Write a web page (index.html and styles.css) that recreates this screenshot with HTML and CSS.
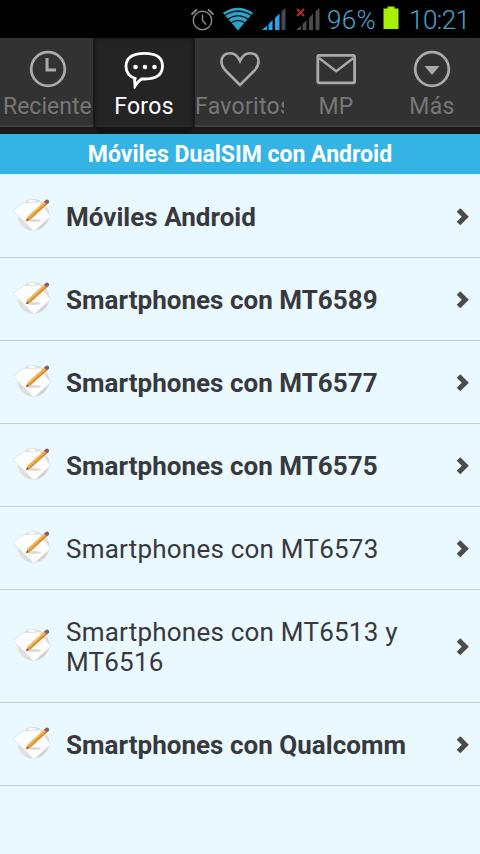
FILE: index.html
```html
<!DOCTYPE html>
<html lang="es">
<head>
<meta charset="utf-8">
<title>Móviles DualSIM con Android</title>
<link rel="stylesheet" href="styles.css">
</head>
<body>
<svg class="defs" aria-hidden="true">
  <defs>
    <linearGradient id="disc" x1="0" y1="0" x2="1" y2="1">
      <stop offset="0" stop-color="#d3d5d3"/><stop offset=".5" stop-color="#e2e3e0"/><stop offset="1" stop-color="#c4c9c2"/>
    </linearGradient>
    <symbol id="note" viewBox="0 0 40 36">
      <circle cx="21.500" cy="17" r="15.500" fill="url(#disc)" stroke="#dfe2df"/>
      <path d="M1 12.500 L12 4.500 L28 4 L38.500 18.500 L22 33.500 Z" fill="#fefdfd" stroke="#e0dedd" stroke-width=".7"/>
      <path d="M15 2.500 Q20 7 25 2.500 L20 1.200 Z" fill="#fff" stroke="#d0d0d8" stroke-width=".5"/>
      <ellipse cx="22" cy="22.500" rx="7" ry="1.500" fill="#c9bfc0" opacity=".6"/>
      <path d="M14 23.200 L15.600 18.600 L32.300 3.200 L35.200 6.400 L18.200 21.800 Z" fill="#e8a645"/>
      <path d="M17.600 21.200 L34.400 5.800" stroke="#b5782f" stroke-width=".8"/>
      <path d="M16.200 19 L32.400 4" stroke="#f7cf72" stroke-width="1"/>
      <path d="M14 23.200 L15.200 20.400 L16.800 22 Z" fill="#5a3e35"/>
      <path d="M32 3.500 L34.500 1.500 Q37.500 1.700 37 4.600 L35 6.600 Z" fill="#8d5862"/>
    </symbol>
    <symbol id="arrow" viewBox="0 0 14 20">
      <path d="M2.500 3 L9.300 9.800 L2.500 16.600" fill="none" stroke="#4b4b4b" stroke-width="5"/>
    </symbol>
  </defs>
</svg>

<div class="status">
  <svg class="signals" viewBox="0 0 140 38" width="140" height="38">
    <g fill="none" stroke="#858585" stroke-width="1.500">
      <circle cx="12.500" cy="20.500" r="9.200"/>
      <path d="M12.500 14.500 V20.500 L16 24.500"/>
      <path d="M1.500 14.500 L7 9.500 M18 9.500 L23.500 14.500" stroke-width="2"/>
    </g>
    <path d="M48 30.500 L32.800 12.800 Q48 2.500 63.200 12.800 Z" fill="#319fc6"/>
    <g fill="none" stroke="#000" stroke-width="1.100">
      <path d="M34 15.800 Q48 6.500 62 15.800"/><path d="M37 19.600 Q48 12 59 19.600"/><path d="M40 23.400 Q48 17.500 56 23.400"/>
    </g>
    <g fill="#2aa4e8">
      <path d="M72 30 L77 25.500 V30 Z"/><path d="M78.500 24 L82.500 20 V30 H78.500 Z"/><path d="M85 18 L89.500 13.500 V30 H85 Z"/>
    </g>
    <path d="M91.500 11.500 L95.500 8 V30 H91.500 Z" fill="#494949"/>
    <g fill="#4b4b4b">
      <path d="M106 30 L111 25.500 V30 Z"/><path d="M112.500 24 L116.500 20 V30 H112.500 Z"/><path d="M119 18 L123 13.500 V30 H119 Z"/><path d="M125.500 11.500 L129.500 8 V30 H125.500 Z"/>
    </g>
    <path d="M107 9 L114 16 M114 9 L107 16" stroke="#b52b2b" stroke-width="2"/>
  </svg>
  <span class="percent">96%</span>
  <svg class="battery" viewBox="0 0 16 24" width="16" height="24"><path d="M0.500 2.500 H4.500 V0.500 H11.500 V2.500 H15.500 V23 H0.500 Z" fill="#a9f000"/></svg>
  <span class="time">10:21</span>
</div>

<nav class="tabs">
  <a class="tab recent">
    <svg viewBox="0 0 40 40" width="40" height="40"><circle cx="20" cy="20" r="16.800"/><path d="M19 9 V21 H28" stroke-width="3"/></svg>
    <span class="label">Reciente</span>
  </a>
  <a class="tab active">
    <svg viewBox="0 0 40 40" width="40" height="40">
      <path d="M12.500 30 Q2 27 2 17.500 Q2 4.300 20.500 4.300 Q38.500 4.300 38.500 17 Q38.500 30 21 30 L17.500 30 Q13 33 11 37 L10.500 30"/>
      <g class="dots"><circle cx="11.500" cy="18" r="2.300"/><circle cx="21" cy="18" r="2.300"/><circle cx="30.500" cy="18" r="2.300"/></g>
    </svg>
    <span class="label">Foros</span>
  </a>
  <a class="tab favs">
    <svg viewBox="0 0 40 40" width="40" height="40"><path d="M20 36 L5.500 21.500 C-2 13 2 4.300 10 4.300 C15 4.300 18 7.500 20 12 C22 7.500 25 4.300 30 4.300 C38 4.300 42 13 34.500 21.500 Z" stroke-width="2.600"/></svg>
    <span class="label">Favoritos</span>
  </a>
  <a class="tab">
    <svg viewBox="0 0 40 40" width="40" height="40"><rect x="1.800" y="6.300" width="36.800" height="27.500" rx="1.500"/><path d="M3 9 L20.200 22.200 L37.500 9" stroke-width="2.400"/></svg>
    <span class="label">MP</span>
  </a>
  <a class="tab">
    <svg viewBox="0 0 40 40" width="40" height="40"><circle cx="20" cy="20" r="16.800"/><path class="solid" d="M12.500 17 H27.500 L20 26 Z"/></svg>
    <span class="label">Más</span>
  </a>
</nav>

<h1 class="title"><span>Móviles DualSIM con Android</span></h1>

<ul class="forums">
  <li class="unread"><svg class="note"><use href="#note"/></svg><span class="name">Móviles Android</span><svg class="arrow"><use href="#arrow"/></svg></li>
  <li class="unread"><svg class="note"><use href="#note"/></svg><span class="name">Smartphones con MT6589</span><svg class="arrow"><use href="#arrow"/></svg></li>
  <li class="unread"><svg class="note"><use href="#note"/></svg><span class="name">Smartphones con MT6577</span><svg class="arrow"><use href="#arrow"/></svg></li>
  <li class="unread"><svg class="note"><use href="#note"/></svg><span class="name">Smartphones con MT6575</span><svg class="arrow"><use href="#arrow"/></svg></li>
  <li><svg class="note"><use href="#note"/></svg><span class="name">Smartphones con MT6573</span><svg class="arrow"><use href="#arrow"/></svg></li>
  <li><svg class="note"><use href="#note"/></svg><span class="name">Smartphones con MT6513 y MT6516</span><svg class="arrow"><use href="#arrow"/></svg></li>
  <li class="unread"><svg class="note"><use href="#note"/></svg><span class="name">Smartphones con Qualcomm</span><svg class="arrow"><use href="#arrow"/></svg></li>
</ul>
</body>
</html>
```
FILE: styles.css
```css
* { box-sizing: border-box; }
body {
  margin: 0;
  height: 854px;
  overflow: hidden;
  background: #eaf8ff;
  font-family: Roboto, "Liberation Sans", sans-serif;
  color: #38393c;
}
svg { display: block; flex: none; }
.defs { position: absolute; width: 0; height: 0; }

.status {
  display: flex;
  align-items: center;
  height: 38px;
  padding-left: 190px;
  background: #000;
  color: #4ba3c9;
  font-size: 26px;
  font-weight: 300;
  line-height: 38px;
  white-space: nowrap;
}
.status span { padding-top: 2px; }
.percent { width: 53px; margin-left: -3px; letter-spacing: .3px; }
.battery { margin-left: 3px; margin-top: -2px; }
.time { margin-left: 10px; letter-spacing: -.5px; }

.tabs {
  display: grid;
  grid-template-columns: 93px 102px 93px 96px 96px;
  height: 96px;
  background: linear-gradient(#323232 0 87px, #414141 87px 89px, #1b1a19 89px);
}
.tab {
  display: flex;
  flex-direction: column;
  align-items: center;
  padding-top: 11px;
  color: #777;
}
.tab svg {
  fill: none;
  stroke: #aaa;
  stroke-width: 2.800;
}
.tab .solid { fill: #aaa; stroke: none; }
.tab .label {
  font-size: 23px;
  line-height: 28px;
  margin-top: 4px;
  letter-spacing: .3px;
  white-space: nowrap;
}
.recent { padding-left: 3px; }
.recent .label { align-self: flex-start; letter-spacing: 0; }
.favs .label { align-self: flex-start; width: 89px; overflow: hidden; }
.favs svg { margin-right: 3px; }
.tab.active {
  background: linear-gradient(#242424 87px, #2b2b2b 87px 89px, #151515 89px);
  background-origin: border-box;
  color: #fff;
  border: solid #191919;
  border-width: 0 2px;
  border-radius: 0 0 9px 9px;
  box-shadow: inset 0 0 4px #151515;
}
.active svg { stroke: #fff; }
.active .dots { fill: #fff; stroke: none; }

.title {
  display: flex;
  justify-content: center;
  align-items: center;
  height: 41px;
  margin: 0;
  padding-top: 1px;
  background: #34b3e5;
  border-bottom: 1px solid #d8f2fb;
  color: #fff;
  font-size: 23px;
  line-height: 40px;
  font-weight: 700;
}

.forums { margin: 0; padding: 0; list-style: none; }
.forums li {
  display: flex;
  align-items: center;
  min-height: 83px;
  padding: 27px 10px 25px 12px;
  border-bottom: 1px solid #bccfdb;
  font-size: 26px;
  line-height: 30px;
}
.note { width: 40px; height: 36px; margin: -10px 0 -8px; }
.name { flex: 1; margin-left: 14px; padding-right: 35px; letter-spacing: .22px; }
.unread .name { font-weight: 700; letter-spacing: .02px; }
.arrow { width: 14px; height: 20px; margin-top: -1px; }
```
